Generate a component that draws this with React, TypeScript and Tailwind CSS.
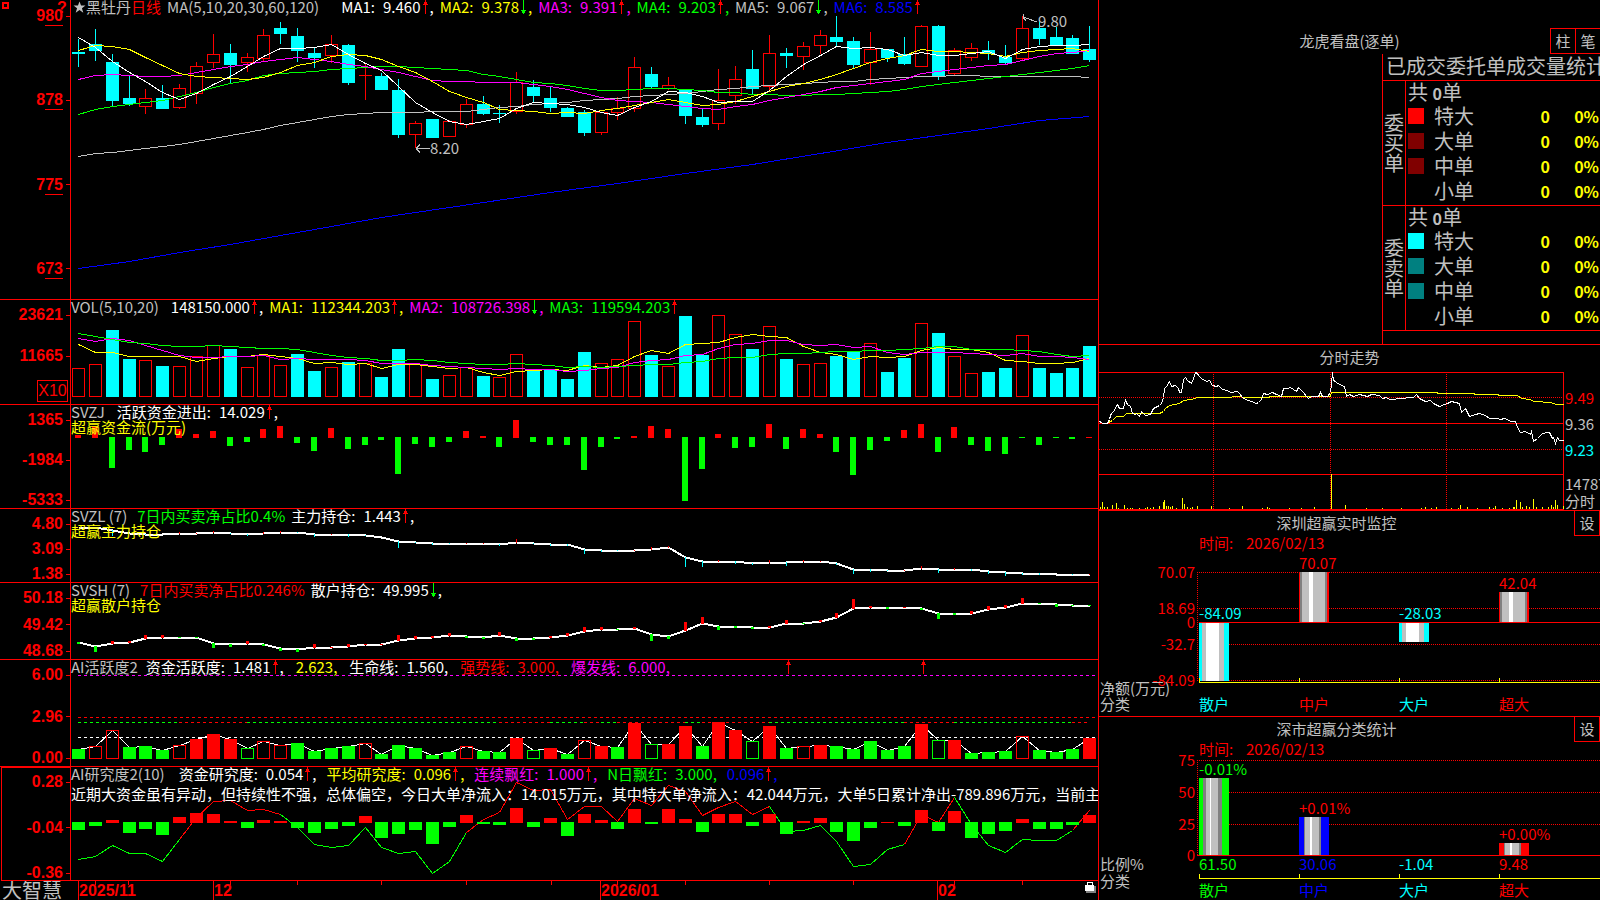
import type { ReactNode } from 'react'

const RED = '#ff0000'
const CYAN = '#00ffff'
const GREEN = '#00ff00'
const YELLOW = '#ffff00'
const MAGENTA = '#ff00ff'
const BLUE = '#0000ff'
const SILVER = '#c0c0c0'
const GRAY = '#808080'
const WHITE = '#ffffff'

const CHART_W = 1027

// centre of the n-th trading day
const cx = (i: number) => 7 + Math.round(i * 16.855)

// kind (u = up, d = down), high, body top, body bottom, low
type Candle = [string, number, number, number, number]

const candles: Candle[] = [
  ['d', 39, 52, 54, 67], ['d', 29, 44, 51, 61], ['d', 54, 62, 101, 106], ['d', 76, 98, 104, 106],
  ['u', 89, 98, 107, 114], ['d', 85, 98, 109, 109], ['u', 84, 88, 108, 109], ['u', 62, 66, 94, 104],
  ['u', 34, 54, 63, 68], ['d', 44, 53, 65, 83], ['u', 53, 57, 63, 72], ['u', 29, 35, 59, 61],
  ['d', 22, 28, 34, 44], ['d', 28, 36, 51, 62], ['d', 48, 53, 58, 68], ['u', 35, 44, 56, 63],
  ['d', 44, 45, 83, 85], ['u', 63, 75, 76, 100], ['d', 73, 76, 90, 90], ['d', 79, 90, 135, 138],
  ['u', 121, 123, 135, 148], ['d', 119, 119, 138, 138], ['u', 120, 121, 137, 137], ['u', 99, 104, 125, 128],
  ['d', 96, 104, 114, 115], ['d', 105, 113, 114, 123], ['u', 72, 82, 112, 114], ['d', 80, 87, 96, 102],
  ['d', 86, 98, 108, 112], ['d', 107, 108, 117, 117], ['d', 110, 112, 133, 136], ['u', 112, 112, 133, 135],
  ['u', 97, 108, 113, 120], ['u', 57, 67, 109, 112], ['d', 67, 74, 87, 88], ['u', 77, 85, 89, 90],
  ['d', 89, 89, 116, 124], ['d', 109, 117, 125, 127], ['u', 69, 100, 124, 130], ['u', 66, 79, 96, 104],
  ['d', 50, 69, 89, 95], ['u', 35, 53, 87, 91], ['d', 48, 53, 56, 68], ['u', 42, 46, 57, 70],
  ['u', 30, 35, 46, 54], ['d', 16, 37, 42, 46], ['d', 37, 41, 65, 68], ['u', 32, 49, 63, 85],
  ['d', 49, 49, 58, 62], ['d', 37, 54, 64, 65], ['u', 25, 26, 67, 67], ['d', 25, 26, 77, 80],
  ['u', 48, 50, 74, 76], ['u', 43, 48, 58, 61], ['d', 41, 50, 54, 60], ['d', 45, 57, 63, 64],
  ['u', 16, 28, 59, 60], ['d', 20, 28, 39, 45], ['d', 27, 37, 45, 45], ['d', 35, 38, 54, 54],
  ['d', 26, 49, 60, 62],
]

const ma5 = [37, 47, 61, 72, 81, 92, 99, 93, 84, 76, 66, 56, 48, 48, 47, 44, 54, 63, 70, 86, 102, 112, 121, 124, 121, 118, 108, 102, 103, 104, 107, 112, 115, 107, 101, 91, 92, 96, 102, 101, 101, 90, 76, 64, 55, 46, 48, 47, 49, 55, 52, 55, 55, 53, 51, 58, 49, 46, 45, 45, 44]
const ma10 = [50, 45, 46, 49, 57, 65, 73, 76, 77, 78, 79, 77, 72, 65, 62, 56, 54, 55, 59, 66, 72, 81, 91, 97, 102, 109, 110, 111, 113, 112, 113, 110, 108, 105, 102, 99, 102, 105, 104, 101, 96, 91, 86, 83, 79, 74, 68, 62, 58, 55, 49, 51, 51, 52, 53, 56, 52, 50, 49, 48, 51]
const ma20 = [79, 75, 74, 75, 76, 76, 75, 72, 69, 66, 64, 61, 59, 57, 59, 61, 64, 66, 69, 72, 76, 80, 81, 81, 82, 82, 82, 84, 86, 89, 93, 97, 100, 101, 102, 104, 106, 108, 109, 106, 104, 100, 97, 94, 91, 87, 85, 83, 81, 79, 73, 71, 69, 67, 65, 64, 60, 56, 53, 52, 50]
const ma30 = [114, 109, 106, 104, 102, 100, 96, 92, 87, 83, 80, 75, 73, 72, 71, 69, 68, 67, 66, 66, 67, 68, 69, 70, 74, 76, 79, 82, 83, 85, 88, 90, 90, 89, 88, 88, 89, 90, 92, 92, 94, 94, 95, 95, 94, 94, 93, 92, 91, 89, 86, 84, 82, 80, 78, 76, 74, 72, 70, 68, 65]
const ma60 = [156, 153, 152, 150, 148, 146, 144, 141, 138, 135, 132, 129, 125, 122, 119, 116, 114, 113, 112, 112, 112, 111, 111, 111, 109, 107, 106, 104, 103, 102, 100, 99, 98, 96, 95, 94, 93, 91, 89, 88, 86, 85, 84, 83, 82, 81, 81, 79, 78, 77, 76, 76, 75, 75, 76, 76, 76, 76, 76, 76, 77]
const ma120: [number, number][] = [[0, 268], [3, 261], [6, 252], [9, 244], [12, 235], [15, 226], [18, 217], [20, 212], [24, 202], [28, 192], [32, 183], [36, 173], [40, 164], [44, 153], [48, 142], [51, 135], [54, 128], [57, 120], [60, 116]]

const volumes: [string, number][] = [
  ['u', 68], ['u', 64], ['d', 30], ['d', 59], ['u', 60], ['d', 66], ['u', 66], ['u', 56], ['u', 45], ['d', 49],
  ['u', 67], ['u', 55], ['u', 65], ['d', 54], ['d', 71], ['u', 67], ['d', 62], ['u', 63], ['d', 77], ['d', 49],
  ['u', 64], ['d', 79], ['u', 75], ['u', 67], ['d', 76], ['u', 77], ['u', 54], ['d', 70], ['d', 70], ['d', 79],
  ['d', 52], ['u', 63], ['u', 59], ['u', 21], ['d', 55], ['u', 66], ['d', 16], ['d', 55], ['u', 15], ['u', 34],
  ['d', 49], ['u', 26], ['d', 59], ['u', 64], ['u', 63], ['d', 56], ['d', 51], ['u', 43], ['d', 72], ['d', 58],
  ['u', 23], ['d', 33], ['u', 56], ['u', 73], ['d', 72], ['d', 68], ['u', 35], ['d', 68], ['d', 73], ['d', 68],
  ['d', 46],
]
const volMa5 = [44, 52, 52, 56, 56, 56, 56, 61, 58, 56, 56, 54, 56, 58, 63, 62, 64, 63, 68, 64, 64, 66, 68, 67, 72, 75, 71, 70, 69, 70, 65, 67, 65, 56, 50, 53, 44, 43, 42, 37, 34, 36, 37, 46, 52, 54, 59, 56, 57, 56, 50, 47, 49, 49, 52, 60, 61, 63, 63, 62, 58]
const volMa10 = [38, 41, 38, 40, 45, 50, 55, 57, 57, 56, 56, 55, 59, 58, 59, 59, 59, 60, 63, 63, 63, 65, 66, 67, 68, 69, 68, 69, 69, 71, 70, 68, 67, 62, 60, 59, 55, 54, 48, 44, 43, 40, 40, 44, 45, 44, 47, 46, 52, 54, 52, 52, 52, 53, 54, 55, 53, 56, 56, 57, 59]
const volMa20 = [33, 36, 39, 42, 43, 45, 46, 46, 45, 46, 47, 48, 48, 49, 52, 55, 57, 58, 60, 60, 59, 60, 62, 63, 64, 64, 63, 64, 65, 67, 66, 67, 66, 65, 64, 64, 62, 61, 58, 57, 57, 54, 53, 53, 52, 51, 51, 50, 50, 49, 48, 46, 46, 49, 49, 49, 50, 51, 54, 56, 55]

const fundFlow = [3, 12, -31, -13, -15, -8, 9, 4, 7, -9, -5, 9, 12, -6, -14, 10, -12, -8, -3, -37, -7, -10, -5, 7, 2, -10, 18, -5, -8, -8, -33, -10, -2, 2, 12, 9, -64, -32, 4, -11, -10, 14, -12, 9, 4, -15, -38, -13, -4, 8, 14, -15, 11, -8, -14, -17, -1, -8, -1, -2, 1]

const mainHold = [18, 18, 21, 24, 25, 25, 24, 24, 23, 24, 25, 24, 23, 23, 25, 25, 25, 26, 28, 32, 33, 34, 34, 34, 34, 35, 33, 34, 35, 35, 40, 41, 41, 41, 40, 38, 48, 52, 52, 52, 54, 53, 53, 52, 52, 54, 60, 60, 61, 61, 59, 60, 60, 60, 62, 63, 64, 64, 65, 65, 65]
const mainHoldTicks = [0, 0, -6, -1, -1, 0, 2, 1, 2, -1, -2, 2, 2, -1, -3, 1, -3, -1, 0, -7, -1, -2, -1, 1, 1, -2, 4, -1, -2, -2, -5, -2, -1, 1, 3, 2, -10, -6, 2, -3, -2, 3, -4, 2, 1, -2, -5, -3, -1, 1, 3, -4, 2, -2, -3, -4, -2, -2, 0, -1, 1]

const retailHold = [59, 63, 60, 59, 55, 54, 54, 54, 60, 61, 60, 61, 65, 66, 64, 64, 63, 61, 61, 57, 55, 54, 52, 53, 54, 52, 55, 55, 54, 52, 48, 46, 46, 45, 51, 53, 47, 40, 43, 43, 44, 44, 40, 40, 38, 34, 25, 24, 24, 24, 25, 30, 30, 30, 26, 24, 20, 20, 21, 22, 22]
const retailTicks = [-2, -6, 3, 2, 4, 3, -1, -1, -5, -3, 3, -2, -3, -3, 4, 1, 3, 1, 1, 6, 3, 2, 3, -2, -2, 4, -3, -2, 2, 3, 5, 3, -1, 2, -7, -3, 9, 7, -4, -2, -2, 2, 4, -1, 2, 5, 10, 2, -2, 1, -2, -6, -2, 3, 4, 3, 6, -1, -3, -1, -1]

// capital letter = filled bar, small letter = outline
const activity: [string, number][] = [
  ['G', 89], ['r', 86], ['r', 70], ['G', 87], ['G', 86], ['G', 90], ['r', 85], ['R', 79], ['R', 74], ['R', 79],
  ['g', 88], ['r', 81], ['r', 85], ['G', 83], ['G', 91], ['G', 88], ['G', 86], ['r', 83], ['G', 94], ['G', 85],
  ['G', 88], ['G', 95], ['G', 92], ['r', 86], ['G', 91], ['G', 92], ['R', 78], ['g', 90], ['R', 88], ['G', 94],
  ['r', 80], ['R', 86], ['G', 87], ['R', 63], ['g', 84], ['R', 84], ['R', 66], ['G', 86], ['R', 62], ['R', 70],
  ['g', 81], ['R', 66], ['G', 88], ['r', 86], ['R', 85], ['G', 86], ['G', 89], ['G', 81], ['G', 90], ['G', 86],
  ['R', 64], ['g', 80], ['R', 80], ['G', 93], ['G', 92], ['G', 91], ['r', 76], ['G', 90], ['G', 92], ['G', 89],
  ['R', 78],
]
const trendSwitches = [0, 6, 10, 25, 28, 30, 31, 32, 36, 37, 41, 49, 52, 59, 60]

const research = [-8, -4, 3, -11, -7, -13, 6, 10, 9, 2, -6, 3, 2, -6, -11, -7, -4, 7, -16, -12, -8, -22, -5, 8, -2, -3, 15, -5, 5, -14, 9, 3, -7, 14, -2, 14, 4, -10, 9, 9, -4, 9, -12, 2, 5, -10, -19, -6, 1, -4, 13, -9, 12, -16, -12, -9, 4, -7, -7, -3, 8]
const researchAvg = [92, 89, 78, 86, 86, 94, 72, 50, 34, 33, 43, 42, 47, 60, 77, 80, 78, 60, 80, 86, 84, 106, 94, 65, 52, 45, 15, 23, 22, 52, 39, 39, 54, 31, 38, 18, 24, 48, 40, 34, 47, 39, 64, 63, 58, 74, 99, 97, 82, 77, 47, 55, 30, 57, 78, 85, 72, 73, 73, 63, 43]
const avgSwitches = [0, 6, 12, 23, 41, 49, 52, 59, 60]

const comment =
  '近期大资金虽有异动，但持续性不强，总体偏空，今日大单净流入：14.015万元，其中特大单净流入：42.044万元，大单5日累计净出-789.896万元，当前主力'

const priceLine =
  '0,49 2,50 3,51 8,51 10,47 11,43 12,41 13,40 15,38 17,33 18,32 20,36 24,36 26,28 28,32 31,34 33,41 36,42 37,41 40,44 42,39 45,42 46,43 51,42 54,36 58,34 60,33 62,31 64,25 65,16 67,14 70,9 72,14 76,13 79,16 80,20 82,20 84,7 86,5 88,8 92,11 94,6 96,0 98,1 99,3 102,6 107,9 110,8 113,13 117,14 119,13 123,17 128,18 131,20 138,19 140,21 143,25 146,27 152,29 157,31 159,30 162,27 164,21 168,22 173,20 177,22 182,24 184,16 188,16 191,15 194,17 197,19 199,15 204,20 207,24 209,26 212,24 219,24 221,20 223,24 228,24 231,20 232,12 233,0 234,8 236,9 238,11 245,14 247,24 250,22 254,24 260,22 264,23 268,24 272,22 280,23 283,26 287,25 290,27 294,27 299,26 305,26 308,25 314,25 317,22 320,26 326,29 331,28 334,31 340,34 345,32 348,31 352,29 360,31 362,40 364,38 366,36 370,44 376,42 380,41 386,43 390,46 398,46 401,47 405,46 412,49 416,49 418,55 421,60 426,59 431,62 432,59 434,69 438,66 443,61 448,60 450,60 453,66 454,65 456,71 458,65 460,68 464,68'
const avgLine =
  '7,51 13,48 17,44 24,44 27,41 60,41 64,39 66,36 70,33 80,31 84,28 92,27 98,25 131,25 134,24 150,25 168,25 172,24 231,24 232,20 336,20 340,21 372,21 378,22 396,22 402,23 418,23 422,26 430,27 435,29 451,30 457,32 464,32'
const minuteVolume = [
  [1, 2], [3, 7], [5, 2], [8, 2], [13, 4], [17, 6], [19, 1], [25, 4], [28, 1], [31, 1], [33, 1], [40, 1], [46, 1],
  [48, 2], [51, 1], [54, 2], [60, 3], [64, 7], [65, 9], [67, 3], [69, 3], [71, 2], [73, 3], [77, 1], [83, 11],
  [85, 5], [88, 2], [91, 1], [93, 2], [98, 3], [112, 3], [130, 1], [143, 3], [163, 1], [168, 2], [170, 1],
  [190, 1], [202, 1], [215, 2], [232, 35], [246, 4], [267, 1], [283, 1], [302, 1], [322, 1], [326, 2], [332, 1],
  [337, 2], [352, 1], [359, 1], [361, 4], [368, 2], [378, 1], [390, 2], [394, 1], [396, 3], [403, 1], [410, 1],
  [414, 2], [415, 2], [417, 9], [421, 7], [423, 2], [427, 3], [430, 2], [434, 10], [437, 2], [443, 2], [449, 2],
  [452, 4], [454, 2], [456, 9], [458, 4], [464, 3],
]

function Series({ data, color, width = 1 }: { data: number[]; color: string; width?: number }) {
  const points = data.map((y, i) => `${cx(i) + 0.5},${y + 0.5}`).join(' ')
  return <polyline points={points} fill="none" stroke={color} strokeWidth={width} />
}

function Arrow({ dir }: { dir: 'up' | 'down' }) {
  return (
    <svg width="9" height="14" shapeRendering="crispEdges" className="shrink-0">
      {dir === 'up' ? (
        <path d="M4 0h1v14H4zM3 2h3v3H3zM2 4h1v1H2zM6 4h1v1H6z" fill={RED} />
      ) : (
        <path d="M4 0h1v14H4zM3 10h3v3H3zM2 10h1v1H2zM6 10h1v1H6z" fill={GREEN} />
      )}
    </svg>
  )
}

type Item = { label?: string; value: string; dir?: 'up' | 'down'; cls: string; end?: boolean }

function Readout({ name, items, gap = 'gap-1.5', children }: { name: string; items: Item[]; gap?: string; children?: ReactNode }) {
  return (
    <div className={`absolute left-0 top-0 flex h-3.5 items-center whitespace-nowrap text-[15px] leading-[14px] ${gap}`}>
      <span className="mr-1 text-[#c0c0c0]">{name}</span>
      {children}
      {items.map((it) => (
        <span key={it.label ?? it.value} className={`flex items-center ${it.cls}`}>
          {it.label && <span className="mr-2">{it.label}:</span>}
          <span>{it.value}</span>
          {it.dir && <Arrow dir={it.dir} />}
          {!it.end && <span>,</span>}
        </span>
      ))}
    </div>
  )
}

function Axis({ labels, className = 'h-full pt-[7px]', underline, children }: { labels: string[]; className?: string; underline?: boolean; children?: ReactNode }) {
  return (
    <div className="w-[71px] shrink-0 border-r border-[#ff0000]">
      <div className={`flex flex-col justify-between ${className}`}>
        {labels.map((l) => (
          <div key={l} className="relative flex h-4 items-center justify-end gap-[3px] font-['Liberation_Sans',sans-serif] text-base font-bold leading-4 text-[#ff0000]">
            <span>{l}</span>
            <span className="h-px w-1 bg-[#ff0000]" />
            {underline && <span className="absolute -bottom-0.5 right-[7px] h-px w-[18px] bg-[#ff0000]" />}
          </div>
        ))}
      </div>
      {children}
    </div>
  )
}

function Plot({ height, children }: { height: number; children: ReactNode }) {
  return (
    <svg
      width="100%"
      height={height}
      viewBox={`0 0 ${CHART_W} ${height}`}
      preserveAspectRatio="none"
      shapeRendering="crispEdges"
      className="block"
    >
      {children}
    </svg>
  )
}

function KLine() {
  return (
    <section className="relative flex h-[300px] border-b border-[#ff0000]">
      <span className="absolute left-[2px] top-[2px] h-[7px] w-[7px] border-2 border-[#ff0000]" />
      <span className="absolute left-[57px] top-0 font-['Liberation_Sans',sans-serif] text-base font-bold leading-4 text-[#ff0000]">?</span>
      <Axis labels={['980', '878', '775', '673']} underline className="h-[277px] pt-2" />
      <div className="relative min-w-0 flex-1">
        <Plot height={299}>
          {candles.map(([kind, high, top, bottom, low], i) => {
            const x = cx(i)
            const color = kind === 'u' ? RED : CYAN
            if (kind === 'd' || bottom - top < 2) {
              return (
                <g key={i} fill={color}>
                  <rect x={x} y={high} width="1" height={low - high} />
                  <rect x={x - 6} y={top} width="13" height={bottom - top} />
                </g>
              )
            }
            return (
              <g key={i}>
                <path d={`M${x + 0.5} ${high}V${top}M${x + 0.5} ${bottom}V${low}`} stroke={color} />
                <rect x={x - 5.5} y={top + 0.5} width="12" height={bottom - top - 1} fill="none" stroke={color} />
              </g>
            )
          })}
          <Series data={ma60} color={SILVER} />
          <polyline points={ma120.map(([i, y]) => `${cx(i) + 0.5},${y + 0.5}`).join(' ')} fill="none" stroke={BLUE} />
          <Series data={ma30} color={GREEN} />
          <Series data={ma20} color={MAGENTA} />
          <Series data={ma10} color={YELLOW} />
          <Series data={ma5} color={WHITE} />
          <path d="M345 148.5H359M345 148.5l4 -4M345 148.5l4 4" stroke={SILVER} fill="none" />
          <text x="359" y="154" fill={SILVER} fontSize="15">8.20</text>
          <path d="M952 17l14 5M952 17l1 -3M952 17l3 4" stroke={SILVER} fill="none" />
          <text x="967" y="27" fill={SILVER} fontSize="15">9.80</text>
        </Plot>
        <div className="absolute left-0.5 top-0 flex h-3.5 items-center whitespace-nowrap text-[15px] leading-[14px] text-[#c0c0c0]">
          <svg width="13" height="14" viewBox="0 0 24 24" fill="currentColor">
            <path d="M12 2l2.8 7.4H23l-6.5 5 2.5 8L12 17.600 5 22.400l2.500-8L1 9.400h8.200z" />
          </svg>
          <span>黑牡丹</span>
          <span className="text-[#ff0000]">日线</span>
        </div>
        <div className="absolute left-24 top-0">
          <Readout
            name="MA(5,10,20,30,60,120)"
            items={[
              { label: 'MA1', value: '9.460', dir: 'up', cls: 'text-white ml-3' },
              { label: 'MA2', value: '9.378', dir: 'down', cls: 'text-[#ffff00]' },
              { label: 'MA3', value: '9.391', dir: 'up', cls: 'text-[#ff00ff]' },
              { label: 'MA4', value: '9.203', dir: 'up', cls: 'text-[#00ff00]' },
              { label: 'MA5', value: '9.067', dir: 'down', cls: 'text-[#c0c0c0]' },
              { label: 'MA6', value: '8.585', dir: 'up', cls: 'text-[#0000ff]', end: true },
            ]}
          />
        </div>
      </div>
    </section>
  )
}

function Volume() {
  return (
    <section className="flex h-[105px] border-b border-[#ff0000]">
      <Axis labels={['23621', '11665']} className="h-16 pt-[7px]">
        <div className="ml-[37px] mt-4 h-[22px] w-[31px] border border-[#ff0000] text-center font-['Liberation_Sans',sans-serif] text-base leading-5 text-[#ff0000]">
          X10
        </div>
      </Axis>
      <div className="relative min-w-0 flex-1">
        <Plot height={104}>
          {volumes.map(([kind, top], i) =>
            kind === 'd' ? (
              <rect key={i} x={cx(i) - 6} y={top} width="13" height={97 - top} fill={CYAN} />
            ) : (
              <rect key={i} x={cx(i) - 5.5} y={top + 0.5} width="12" height={96 - top} fill="none" stroke={RED} />
            ),
          )}
          <Series data={volMa5} color={YELLOW} />
          <Series data={volMa10} color={MAGENTA} />
          <Series data={volMa20} color={GREEN} />
        </Plot>
        <Readout
          name="VOL(5,10,20)"
          items={[
            { value: '148150.000', dir: 'up', cls: 'text-white ml-0.5' },
            { label: 'MA1', value: '112344.203', dir: 'up', cls: 'text-[#ffff00]' },
            { label: 'MA2', value: '108726.398', dir: 'down', cls: 'text-[#ff00ff]' },
            { label: 'MA3', value: '119594.203', dir: 'up', cls: 'text-[#00ff00]', end: true },
          ]}
        />
      </div>
    </section>
  )
}

function Caption({ children }: { children: ReactNode }) {
  return <div className="absolute left-0 top-3.5 text-[15px] leading-4 text-[#ffff00]">{children}</div>
}

function FundFlow() {
  return (
    <section className="flex h-[104px] border-b border-[#ff0000]">
      <Axis labels={['1365', '-1984', '-5333']} />
      <div className="relative min-w-0 flex-1">
        <Plot height={103}>
          {fundFlow.map((v, i) => (
            <rect key={i} x={cx(i) - 3} y={v > 0 ? 33 - v : 32} width="6" height={Math.abs(v)} fill={v > 0 ? RED : GREEN} />
          ))}
        </Plot>
        <Readout name="SVZJ" gap="gap-2" items={[{ label: '活跃资金进出', value: '14.029', dir: 'up', cls: 'text-white' }]} />
        <Caption>超赢资金流(万元)</Caption>
      </div>
    </section>
  )
}

function Holding({ tickWidth, data, ticks, down }: { tickWidth: number; data: number[]; ticks: number[]; down: string }) {
  return (
    <>
      <Series data={data} color={WHITE} width={2} />
      {ticks.map((v, i) => (
        <rect
          key={i}
          x={cx(i) - (tickWidth > 1 ? 1 : 0)}
          y={v > 0 ? data[i] + 1 - v : data[i]}
          width={tickWidth}
          height={Math.abs(v)}
          fill={v > 0 ? RED : down}
        />
      ))}
    </>
  )
}

function MainHolding() {
  return (
    <section className="flex h-[74px] border-b border-[#ff0000]">
      <Axis labels={['4.80', '3.09', '1.38']} />
      <div className="relative min-w-0 flex-1">
        <Plot height={73}>
          <Holding tickWidth={1} data={mainHold} ticks={mainHoldTicks} down={CYAN} />
        </Plot>
        <Readout name="SVZL (7)" items={[{ label: '主力持仓', value: '1.443', dir: 'up', cls: 'text-white' }]}>
          <span className="text-[#00ff00]">7日内买卖净占比0.4%</span>
        </Readout>
        <Caption>超赢主力持仓</Caption>
      </div>
    </section>
  )
}

function RetailHolding() {
  return (
    <section className="flex h-[77px] border-b border-[#ff0000]">
      <Axis labels={['50.18', '49.42', '48.68']} />
      <div className="relative min-w-0 flex-1">
        <Plot height={76}>
          <Holding tickWidth={3} data={retailHold} ticks={retailTicks} down={GREEN} />
        </Plot>
        <Readout name="SVSH (7)" items={[{ label: '散户持仓', value: '49.995', dir: 'down', cls: 'text-white' }]}>
          <span className="text-[#ff0000]">7日内买卖净占比0.246%</span>
        </Readout>
        <Caption>超赢散户持仓</Caption>
      </div>
    </section>
  )
}

function Activity() {
  return (
    <section className="flex h-[107px] border-b border-[#ff0000]">
      <Axis labels={['6.00', '2.96', '0.00']} />
      <div className="relative min-w-0 flex-1">
        <Plot height={106}>
          <path d="M7 15.500H1025" stroke={MAGENTA} strokeDasharray="3 3" />
          <path d="M7 57.500H1025" stroke={RED} strokeDasharray="3 3" />
          <path d="M7 77.500H1025" stroke={WHITE} strokeDasharray="3 3" />
          {trendSwitches.slice(1).map((to, n) => (
            <path
              key={to}
              d={`M${cx(trendSwitches[n])} 62.500H${cx(to)}`}
              stroke={n % 2 === 0 ? GREEN : RED}
              strokeDasharray="3 3"
            />
          ))}
          <Series data={activity.map((a) => a[1])} color={WHITE} />
          {activity.map(([kind, top], i) => {
            const color = kind.toLowerCase() === 'r' ? RED : GREEN
            return kind === 'R' || kind === 'G' ? (
              <rect key={i} x={cx(i) - 6} y={top} width="13" height={99 - top} fill={color} />
            ) : (
              <rect key={i} x={cx(i) - 5.5} y={top + 0.5} width="12" height={98 - top} fill="none" stroke={color} />
            )
          })}
          <path d="M717 0h1v14h-1zM716 2h3v3h-3zM715 4h5v1h-5z" fill={RED} />
          <path d="M852 0h1v14h-1zM851 2h3v3h-3zM850 4h5v1h-5z" fill={RED} />
        </Plot>
        <Readout
          name="AI活跃度2"
          gap="gap-3"
          items={[
            { label: '资金活跃度', value: '1.481', dir: 'up', cls: 'text-white -ml-2' },
            { value: '2.623', cls: 'text-[#ffff00]' },
            { label: '生命线', value: '1.560', cls: 'text-white' },
            { label: '强势线', value: '3.000', cls: 'text-[#ff0000]' },
            { label: '爆发线', value: '6.000', cls: 'text-[#ff00ff]' },
          ]}
        />
      </div>
    </section>
  )
}

function Research() {
  return (
    <section className="flex h-[114px]">
      <div className="relative flex">
        <Axis labels={['0.28', '-0.04', '-0.36']} />
        <span className="absolute inset-y-0 left-px right-0 border border-[#ff0000]" />
      </div>
      <div className="relative min-w-0 flex-1 border-b border-[#ff0000]">
        <Plot height={113}>
          {avgSwitches.slice(1).map((to, n) => {
            const from = avgSwitches[n]
            const points = researchAvg.slice(from, to + 1).map((y, k) => `${cx(from + k) + 0.5},${y + 0.5}`)
            return <polyline key={to} points={points.join(' ')} fill="none" stroke={n % 2 === 0 ? GREEN : RED} />
          })}
          {research.map((v, i) => (
            <rect key={i} x={cx(i) - 6} y={v > 0 ? 56 - v : 55} width="13" height={Math.abs(v)} fill={v > 0 ? RED : GREEN} />
          ))}
        </Plot>
        <Readout
          name="AI研究度2(10)"
          gap="gap-2.5"
          items={[
            { label: '资金研究度', value: '0.054', dir: 'up', cls: 'text-white' },
            { label: '平均研究度', value: '0.096', dir: 'up', cls: 'text-[#ffff00]' },
            { label: '连续飘红', value: '1.000', dir: 'up', cls: 'text-[#ff00ff]' },
            { label: 'N日飘红', value: '3.000', cls: 'text-[#00ff00]' },
            { value: '0.096', dir: 'up', cls: 'text-[#0000ff]' },
          ]}
        />
        <p className="absolute inset-x-0 top-4 overflow-hidden whitespace-nowrap text-[15px] leading-[22px] text-white">{comment}</p>
      </div>
    </section>
  )
}

const weekTicks = [24, 57, 159, 226, 310, 395, 480, 546, 614, 698, 782, 883, 951]
const months = [
  { x: 7, label: '2025/11' },
  { x: 142, label: '12' },
  { x: 529, label: '2026/01' },
  { x: 866, label: '02' },
]

function Timeline() {
  return (
    <footer className="flex h-[19px]">
      <div className="w-[71px] shrink-0 pl-0.5 text-xl leading-[17px] text-[#c0c0c0]">大智慧</div>
      <div className="relative min-w-0 flex-1">
        <Plot height={19}>
          {weekTicks.map((x) => (
            <rect key={x} x={x} y="0" width="1" height="4" fill={RED} />
          ))}
          {months.map((m) => (
            <g key={m.label} fill={RED}>
              <rect x={m.x} y="0" width="1" height="19" />
              <text x={m.x + 1} y="15" fontFamily="Liberation Sans" fontSize="16" fontWeight="700">{m.label}</text>
            </g>
          ))}
          <path d="M1016.500 4V1.500h5V4" stroke={WHITE} fill="none" />
          <rect x="1015" y="5" width="10" height="7" fill={GRAY} />
          <rect x="1014" y="4" width="9" height="6" fill={WHITE} />
        </Plot>
      </div>
    </footer>
  )
}

const buyRows = [
  { label: '特大', swatch: 'bg-[#ff0000]' },
  { label: '大单', swatch: 'bg-[#800000]' },
  { label: '中单', swatch: 'bg-[#800000]' },
  { label: '小单', swatch: 'bg-black' },
]
const sellRows = [
  { label: '特大', swatch: 'bg-[#00ffff]' },
  { label: '大单', swatch: 'bg-[#008080]' },
  { label: '中单', swatch: 'bg-[#008080]' },
  { label: '小单', swatch: 'bg-black' },
]

function OrderGroup({ title, rows }: { title: string; rows: typeof buyRows }) {
  return (
    <tbody>
      <tr className="h-[25px] align-top leading-[22px]">
        <th rowSpan={5} className="border-r border-t border-[#ff0000] p-0 align-middle text-xl font-normal leading-5">
          {title.split('').map((c) => (
            <span key={c} className="block">{c}</span>
          ))}
        </th>
        <td colSpan={4} className="border-t border-[#ff0000] p-0 pl-0.5">
          共 <b className="text-base">0</b>单
        </td>
      </tr>
      {rows.map((r) => (
        <tr key={r.label} className="h-[25px] align-top leading-[22px]">
          <td className="p-0 pl-0.5 pt-[3px]">
            <span className={`block h-4 w-4 ${r.swatch}`} />
          </td>
          <td className="p-0">{r.label}</td>
          <td className="p-0 text-right text-base font-bold leading-[22px] text-[#ffff00]">0</td>
          <td className="p-0 pr-px text-right text-base font-bold leading-[22px] text-[#ffff00]">0%</td>
        </tr>
      ))}
    </tbody>
  )
}

function OrderWatch() {
  return (
    <section className="border-b border-[#ff0000] pt-7 text-[#c0c0c0]">
      <header className="grid h-[26px] grid-cols-[1fr_auto_1fr] items-center text-[15px]">
        <h2 className="col-start-2">龙虎看盘(逐单)</h2>
        <div className="flex justify-self-end">
          <button className="h-[26px] w-[25px] border border-r-0 border-[#ff0000] leading-5">柱</button>
          <button className="h-[26px] w-[25px] border border-r-0 border-[#ff0000] leading-5">笔</button>
        </div>
      </header>
      <div className="flex h-[290px] justify-end">
        <div className="w-[218px] overflow-hidden border-l border-[#ff0000]">
          <h3 className="h-[26px] whitespace-nowrap pl-[3px] text-xl leading-[23px]">已成交委托单成交量统计</h3>
          <table className="w-full table-fixed border-separate border-spacing-0 border-b border-[#ff0000] text-xl">
            <colgroup>
              <col className="w-[23px]" />
              <col className="w-[28px]" />
              <col className="w-[60px]" />
              <col className="w-[56px]" />
              <col className="w-[50px]" />
            </colgroup>
            <OrderGroup title="委买单" rows={buyRows} />
            <OrderGroup title="委卖单" rows={sellRows} />
          </table>
        </div>
      </div>
    </section>
  )
}

function Minute() {
  return (
    <section className="h-[166px] border-b border-[#ff0000]">
      <h2 className="h-[27px] text-center text-[15px] leading-[23px] text-[#c0c0c0]">分时走势</h2>
      <div className="flex">
        <div className="min-w-0 flex-1">
          <svg
            width="100%"
            height="138"
            viewBox="0 0 465 138"
            preserveAspectRatio="none"
            shapeRendering="crispEdges"
            className="block"
          >
            <path d="M0 25.500H464M0 77.500H464M114.500 0V138M231.500 0V138M347.500 0V138" stroke={RED} strokeDasharray="1 1" />
            <path d="M0 0.500H464.500V138M0 51.500H464M0 102.500H464M0 137.500H464" stroke={RED} fill="none" />
            {minuteVolume.map(([x, h]) => (
              <rect key={x} x={x} y={137 - h} width="1" height={h} fill={YELLOW} />
            ))}
            <polyline points={avgLine} stroke={YELLOW} fill="none" transform="translate(0.5 0.5)" />
            <polyline points={priceLine} stroke={WHITE} fill="none" transform="translate(0.5 0.5)" />
          </svg>
        </div>
        <div className="h-[138px] w-9 overflow-hidden whitespace-nowrap pl-px pt-[13px] text-[15px] text-[#c0c0c0]">
          <div className="leading-[26px] text-[#ff0000]">9.49</div>
          <div className="leading-[26px]">9.36</div>
          <div className="leading-[26px] text-[#00ffff]">9.23</div>
          <div className="pt-3 leading-[17px]">14787</div>
          <div className="leading-[17px]">分时</div>
        </div>
      </div>
    </section>
  )
}

type Strip = [string, number]
const lossStrips: Strip[] = [[CYAN, 3], [SILVER, 4], [WHITE, 13], [SILVER, 5], [CYAN, 5]]
const gainStrips: Strip[] = [[RED, 1], [GRAY, 2], [SILVER, 7], [WHITE, 4], [SILVER, 12], [GRAY, 2], [RED, 2]]
const greenStrips: Strip[] = [[GREEN, 4], [GRAY, 3], [SILVER, 4], [WHITE, 1], [SILVER, 7], [GRAY, 4], [GREEN, 7]]
const blueStrips: Strip[] = [[BLUE, 5], [GRAY, 1], [SILVER, 5], [WHITE, 2], [SILVER, 7], [GRAY, 2], [BLUE, 8]]
const redStrips: Strip[] = [[RED, 5], [GRAY, 1], [SILVER, 5], [WHITE, 2], [SILVER, 7], [GRAY, 2], [RED, 8]]

function Pillar({ x, y, h, strips }: { x: number; y: number; h: number; strips: Strip[] }) {
  let at = x
  return (
    <g>
      {strips.map(([color, w], i) => {
        const left = at
        at += w
        return <rect key={i} x={left} y={y} width={w} height={h} fill={color} />
      })}
    </g>
  )
}

function StatPanel({ title, children }: { title: string; children: ReactNode }) {
  return (
    <section>
      <header className="flex h-[25px] text-[15px] text-[#c0c0c0]">
        <h2 className="flex-1 text-center leading-[23px]">{title}</h2>
        <button className="h-[25px] w-[26px] border border-t-0 border-[#ff0000] leading-5">设</button>
      </header>
      {children}
    </section>
  )
}

function Monitor() {
  return (
    <StatPanel title="深圳超赢实时监控">
      <svg width="100%" height="181" fontSize="15" shapeRendering="crispEdges" className="block border-b border-[#ff0000]">
        <text x="100" y="13" fill={RED}>
          时间:<tspan x="147">2026/02/13</tspan>
        </text>
        {[36, 72, 108, 144].map((y) => (
          <line key={y} x1="98" x2="100%" y1={y + 0.5} y2={y + 0.5} stroke={RED} strokeDasharray="1 1" />
        ))}
        <line x1="98.5" x2="98.5" y1="36" y2="145" stroke={RED} strokeDasharray="1 1" />
        <Pillar x={100} y={87} h={58} strips={lossStrips} />
        <Pillar x={200} y={36} h={50} strips={gainStrips} />
        <Pillar x={300} y={87} h={19} strips={lossStrips} />
        <Pillar x={400} y={56} h={30} strips={gainStrips} />
        <line x1="100" x2="100%" y1="86.5" y2="86.5" stroke={RED} />
        <line x1="100" x2="100%" y1="146.5" y2="146.5" stroke={YELLOW} />
        <path d="M100.500 142v4M200.500 142v4M300.500 142v4M400.500 142v4" stroke={YELLOW} />
        <g fill={RED} textAnchor="end">
          <text x="96" y="42">70.07</text>
          <text x="96" y="78">18.69</text>
          <text x="96" y="92">0</text>
          <text x="96" y="114">-32.7</text>
          <text x="96" y="150">-84.09</text>
        </g>
        <text x="100" y="83" fill={CYAN}>-84.09</text>
        <text x="200" y="33" fill={RED}>70.07</text>
        <text x="300" y="83" fill={CYAN}>-28.03</text>
        <text x="400" y="53" fill={RED}>42.04</text>
        <text x="1" y="158" fill={SILVER}>净额(万元)</text>
        <text x="1" y="174" fill={SILVER}>分类</text>
        <text x="100" y="174" fill={CYAN}>散户</text>
        <text x="200" y="174" fill={RED}>中户</text>
        <text x="300" y="174" fill={CYAN}>大户</text>
        <text x="400" y="174" fill={RED}>超大</text>
      </svg>
    </StatPanel>
  )
}

function Breakdown() {
  return (
    <StatPanel title="深市超赢分类统计">
      <svg width="100%" height="158" fontSize="15" shapeRendering="crispEdges" className="block">
        <text x="100" y="13" fill={RED}>
          时间:<tspan x="147">2026/02/13</tspan>
        </text>
        {[18, 50, 82].map((y) => (
          <line key={y} x1="98" x2="100%" y1={y + 0.5} y2={y + 0.5} stroke={RED} strokeDasharray="1 1" />
        ))}
        <line x1="98.5" x2="98.5" y1="18" y2="114" stroke={RED} strokeDasharray="1 1" />
        <Pillar x={100} y={36} h={77} strips={greenStrips} />
        <Pillar x={200} y={75} h={38} strips={blueStrips} />
        <Pillar x={400} y={101} h={12} strips={redStrips} />
        <line x1="98" x2="100%" y1="113.5" y2="113.5" stroke={RED} />
        <line x1="100" x2="100%" y1="136.5" y2="136.5" stroke={YELLOW} />
        <path d="M100.500 132v4M200.500 132v4M300.500 132v4M400.500 132v4" stroke={YELLOW} />
        <g fill={RED} textAnchor="end">
          <text x="96" y="24">75</text>
          <text x="96" y="56">50</text>
          <text x="96" y="88">25</text>
          <text x="96" y="119">0</text>
        </g>
        <text x="100" y="33" fill={GREEN}>-0.01%</text>
        <text x="200" y="72" fill={RED}>+0.01%</text>
        <text x="400" y="98" fill={RED}>+0.00%</text>
        <text x="100" y="128" fill={GREEN}>61.50</text>
        <text x="200" y="128" fill={BLUE}>30.06</text>
        <text x="300" y="128" fill={CYAN}>-1.04</text>
        <text x="400" y="128" fill={RED}>9.48</text>
        <text x="1" y="128" fill={SILVER}>比例%</text>
        <text x="1" y="145" fill={SILVER}>分类</text>
        <text x="100" y="154" fill={GREEN}>散户</text>
        <text x="200" y="154" fill={BLUE}>中户</text>
        <text x="300" y="154" fill={CYAN}>大户</text>
        <text x="400" y="154" fill={RED}>超大</text>
      </svg>
    </StatPanel>
  )
}

export default function App() {
  return (
    <main className="grid min-h-screen grid-cols-[minmax(0,1099fr)_minmax(0,501fr)] bg-black font-['Noto_Sans_CJK_SC',sans-serif]">
      <div className="border-r border-[#ff0000]">
        <KLine />
        <Volume />
        <FundFlow />
        <MainHolding />
        <RetailHolding />
        <Activity />
        <Research />
        <Timeline />
      </div>
      <aside>
        <OrderWatch />
        <Minute />
        <Monitor />
        <Breakdown />
      </aside>
    </main>
  )
}
